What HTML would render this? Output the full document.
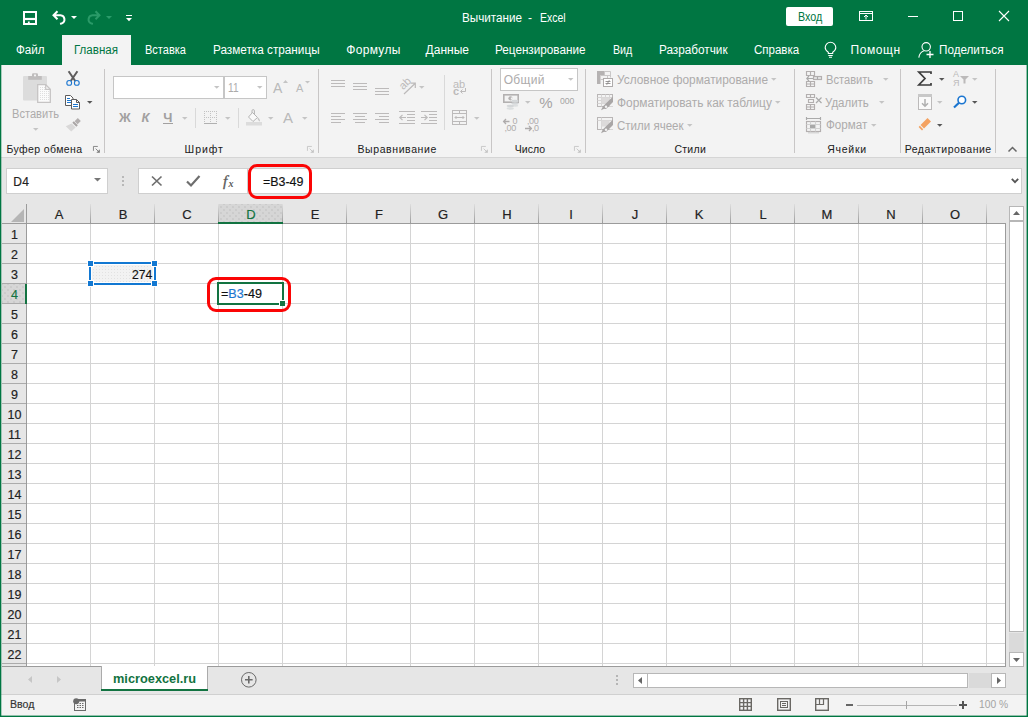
<!DOCTYPE html>
<html lang="ru"><head><meta charset="utf-8"><title>Вычитание - Excel</title>
<style>
*{box-sizing:border-box;margin:0;padding:0}
html,body{width:1028px;height:717px;overflow:hidden}
body{position:relative;background:#e6e6e6;font-family:"Liberation Sans",sans-serif;font-size:12px}
.a{position:absolute}
.t{position:absolute;white-space:pre;line-height:1;transform-origin:0 0}
svg{position:absolute;overflow:visible}
.sep{position:absolute;width:1px;background:#c8c6c6}
.ch,.rh,.b{-webkit-text-stroke:0.18px currentColor}
.ch{position:absolute;top:204px;height:19px;width:66px;text-align:center;font-size:13px;line-height:22px;color:#222}
.rh{position:absolute;left:2px;width:25px;height:20px;text-align:center;font-size:12.5px;line-height:21px;color:#222}

</style></head><body>
<div class="a" style="left:0;top:0;width:1028px;height:65px;background:#007642"></div>
<div class="a" style="left:0;top:65px;width:1028px;height:92px;background:#f3f3f3"></div>
<div class="a" style="left:0;top:157px;width:1028px;height:1px;background:#d5d5d5"></div>
<div class="a" style="left:62px;top:35px;width:69px;height:31px;background:#f3f3f3"></div>
<div class="a" style="left:786px;top:7px;width:47px;height:19px;background:#fff;border-radius:2px"></div>
<div class="sep" style="left:104px;top:69px;height:84px"></div>
<div class="sep" style="left:318px;top:69px;height:84px"></div>
<div class="sep" style="left:491px;top:69px;height:84px"></div>
<div class="sep" style="left:585px;top:69px;height:84px"></div>
<div class="sep" style="left:794px;top:69px;height:84px"></div>
<div class="sep" style="left:900px;top:69px;height:84px"></div>
<div class="sep" style="left:995px;top:69px;height:84px"></div>
<div class="sep" style="left:195px;top:108px;height:20px;background:#d9d9d9"></div>
<div class="sep" style="left:238px;top:108px;height:20px;background:#d9d9d9"></div>
<div class="sep" style="left:444px;top:75px;height:55px;background:#d9d9d9"></div>
<div class="a" style="left:113px;top:76px;width:111px;height:23px;background:#fff;border:1px solid #c6c6c6"></div>
<div class="a" style="left:224px;top:76px;width:43px;height:23px;background:#fff;border:1px solid #c6c6c6"></div>
<div class="a" style="left:500px;top:68px;width:78px;height:23px;background:#fff;border:1px solid #c6c6c6"></div>
<div class="a" style="left:6px;top:168px;width:102px;height:26px;background:#fff;border:1px solid #cfcfcf"></div>
<div class="a" style="left:138px;top:168px;width:884px;height:26px;background:#fff;border:1px solid #cfcfcf"></div>
<div class="a" style="left:247px;top:168px;width:1px;height:26px;background:#cfcfcf"></div>
<div class="a" style="left:2px;top:204px;width:1004px;height:463px;background:#fff"></div>
<div class="a" style="left:2px;top:204px;width:1004px;height:19px;background:#e6e6e6"></div>
<div class="a" style="left:2px;top:204px;width:24px;height:463px;background:#e6e6e6"></div>
<div class="a" style="left:218px;top:204px;width:65px;height:19px;background-color:#d6d6d6;background-image:radial-gradient(circle,#c6c6c6 0.6px,transparent 0.9px),radial-gradient(circle,#c6c6c6 0.6px,transparent 0.9px);background-size:6px 6px;background-position:0 0,3px 3px"></div>
<div class="a" style="left:2px;top:284px;width:24px;height:19px;background-color:#d6d6d6;background-image:radial-gradient(circle,#c6c6c6 0.6px,transparent 0.9px),radial-gradient(circle,#c6c6c6 0.6px,transparent 0.9px);background-size:6px 6px;background-position:0 0,3px 3px"></div>
<div class="a" style="left:27px;top:224px;width:979px;height:443px;background-image:linear-gradient(to right,transparent 63px,#d4d4d4 63px),linear-gradient(to bottom,transparent 19px,#d4d4d4 19px);background-size:64px 20px,64px 20px"></div>
<div class="a" style="left:2px;top:223px;width:1004px;height:1px;background:#9b9b9b"></div>
<div class="a" style="left:26px;top:204px;width:1px;height:463px;background:#9b9b9b"></div>
<div class="a" style="left:90px;top:204px;width:1px;height:19px;background:linear-gradient(#dedede,#9c9c9c)"></div>
<div class="a" style="left:154px;top:204px;width:1px;height:19px;background:linear-gradient(#dedede,#9c9c9c)"></div>
<div class="a" style="left:218px;top:204px;width:1px;height:19px;background:linear-gradient(#dedede,#9c9c9c)"></div>
<div class="a" style="left:282px;top:204px;width:1px;height:19px;background:linear-gradient(#dedede,#9c9c9c)"></div>
<div class="a" style="left:346px;top:204px;width:1px;height:19px;background:linear-gradient(#dedede,#9c9c9c)"></div>
<div class="a" style="left:410px;top:204px;width:1px;height:19px;background:linear-gradient(#dedede,#9c9c9c)"></div>
<div class="a" style="left:474px;top:204px;width:1px;height:19px;background:linear-gradient(#dedede,#9c9c9c)"></div>
<div class="a" style="left:538px;top:204px;width:1px;height:19px;background:linear-gradient(#dedede,#9c9c9c)"></div>
<div class="a" style="left:602px;top:204px;width:1px;height:19px;background:linear-gradient(#dedede,#9c9c9c)"></div>
<div class="a" style="left:666px;top:204px;width:1px;height:19px;background:linear-gradient(#dedede,#9c9c9c)"></div>
<div class="a" style="left:730px;top:204px;width:1px;height:19px;background:linear-gradient(#dedede,#9c9c9c)"></div>
<div class="a" style="left:794px;top:204px;width:1px;height:19px;background:linear-gradient(#dedede,#9c9c9c)"></div>
<div class="a" style="left:858px;top:204px;width:1px;height:19px;background:linear-gradient(#dedede,#9c9c9c)"></div>
<div class="a" style="left:922px;top:204px;width:1px;height:19px;background:linear-gradient(#dedede,#9c9c9c)"></div>
<div class="a" style="left:986px;top:204px;width:1px;height:19px;background:linear-gradient(#dedede,#9c9c9c)"></div>
<div class="a" style="left:2px;top:243px;width:24px;height:1px;background:#ababab"></div>
<div class="a" style="left:2px;top:263px;width:24px;height:1px;background:#ababab"></div>
<div class="a" style="left:2px;top:283px;width:24px;height:1px;background:#ababab"></div>
<div class="a" style="left:2px;top:303px;width:24px;height:1px;background:#ababab"></div>
<div class="a" style="left:2px;top:323px;width:24px;height:1px;background:#ababab"></div>
<div class="a" style="left:2px;top:343px;width:24px;height:1px;background:#ababab"></div>
<div class="a" style="left:2px;top:363px;width:24px;height:1px;background:#ababab"></div>
<div class="a" style="left:2px;top:383px;width:24px;height:1px;background:#ababab"></div>
<div class="a" style="left:2px;top:403px;width:24px;height:1px;background:#ababab"></div>
<div class="a" style="left:2px;top:423px;width:24px;height:1px;background:#ababab"></div>
<div class="a" style="left:2px;top:443px;width:24px;height:1px;background:#ababab"></div>
<div class="a" style="left:2px;top:463px;width:24px;height:1px;background:#ababab"></div>
<div class="a" style="left:2px;top:483px;width:24px;height:1px;background:#ababab"></div>
<div class="a" style="left:2px;top:503px;width:24px;height:1px;background:#ababab"></div>
<div class="a" style="left:2px;top:523px;width:24px;height:1px;background:#ababab"></div>
<div class="a" style="left:2px;top:543px;width:24px;height:1px;background:#ababab"></div>
<div class="a" style="left:2px;top:563px;width:24px;height:1px;background:#ababab"></div>
<div class="a" style="left:2px;top:583px;width:24px;height:1px;background:#ababab"></div>
<div class="a" style="left:2px;top:603px;width:24px;height:1px;background:#ababab"></div>
<div class="a" style="left:2px;top:623px;width:24px;height:1px;background:#ababab"></div>
<div class="a" style="left:2px;top:643px;width:24px;height:1px;background:#ababab"></div>
<div class="a" style="left:2px;top:663px;width:24px;height:1px;background:#ababab"></div>
<div class="a" style="left:218px;top:222px;width:65px;height:2px;background:#127341"></div>
<div class="a" style="left:25px;top:284px;width:2px;height:20px;background:#127341"></div>
<div class="a" style="left:1005px;top:223px;width:1px;height:444px;background:#9b9b9b"></div>
<div class="a" style="left:2px;top:666px;width:1004px;height:1px;background:#9b9b9b"></div>
<svg style="left:11px;top:209px" width="13" height="13"><path d="M13 0V13H0Z" fill="#b5b5b5"/></svg>
<div class="ch" style="left:26px">A</div>
<div class="ch" style="left:90px">B</div>
<div class="ch" style="left:154px">C</div>
<div class="ch" style="left:218px;color:#127341">D</div>
<div class="ch" style="left:282px">E</div>
<div class="ch" style="left:346px">F</div>
<div class="ch" style="left:410px">G</div>
<div class="ch" style="left:474px">H</div>
<div class="ch" style="left:538px">I</div>
<div class="ch" style="left:602px">J</div>
<div class="ch" style="left:666px">K</div>
<div class="ch" style="left:730px">L</div>
<div class="ch" style="left:794px">M</div>
<div class="ch" style="left:858px">N</div>
<div class="ch" style="left:922px">O</div>
<div class="rh" style="top:225px">1</div>
<div class="rh" style="top:245px">2</div>
<div class="rh" style="top:265px">3</div>
<div class="rh" style="top:285px;color:#127341">4</div>
<div class="rh" style="top:305px">5</div>
<div class="rh" style="top:325px">6</div>
<div class="rh" style="top:345px">7</div>
<div class="rh" style="top:365px">8</div>
<div class="rh" style="top:385px">9</div>
<div class="rh" style="top:405px">10</div>
<div class="rh" style="top:425px">11</div>
<div class="rh" style="top:445px">12</div>
<div class="rh" style="top:465px">13</div>
<div class="rh" style="top:485px">14</div>
<div class="rh" style="top:505px">15</div>
<div class="rh" style="top:525px">16</div>
<div class="rh" style="top:545px">17</div>
<div class="rh" style="top:565px">18</div>
<div class="rh" style="top:585px">19</div>
<div class="rh" style="top:605px">20</div>
<div class="rh" style="top:625px">21</div>
<div class="rh" style="top:645px">22</div>
<div class="a" style="left:89px;top:262px;width:67px;height:23px;border:2px solid #1278d2;background:#fff"></div>
<div class="a" style="left:92px;top:265px;width:61px;height:17px;background-color:#f2f2f2;background-image:radial-gradient(circle,#e2e2e2 0.6px,transparent 0.8px);background-size:3px 3px"></div>
<div class="a" style="left:88px;top:261px;width:5px;height:5px;background:#1278d2;box-shadow:0 0 0 1px #fff"></div>
<div class="a" style="left:152px;top:261px;width:5px;height:5px;background:#1278d2;box-shadow:0 0 0 1px #fff"></div>
<div class="a" style="left:88px;top:281px;width:5px;height:5px;background:#1278d2;box-shadow:0 0 0 1px #fff"></div>
<div class="a" style="left:152px;top:281px;width:5px;height:5px;background:#1278d2;box-shadow:0 0 0 1px #fff"></div>
<div class="a" style="left:217px;top:282px;width:67px;height:23px;border:2px solid #127341;background:#fff"></div>
<div class="a" style="left:279px;top:300px;width:6px;height:6px;background:#127341;border:1px solid #fff;border-right:0;border-bottom:0"></div>
<div class="a" style="left:207px;top:277px;width:84px;height:35px;border:3px solid #fb0505;border-radius:9px"></div>
<div class="a" style="left:248px;top:164px;width:64px;height:35px;border:3px solid #fb0505;border-radius:9px"></div>
<div class="a" style="left:1009px;top:633px;width:15px;height:19px;background:#dadada"></div>
<div class="a" style="left:1009px;top:206px;width:15px;height:15px;background:#fff;border:1px solid #b7b7b7"></div>
<div class="a" style="left:1009px;top:221px;width:15px;height:411px;background:#fff;border:1px solid #b7b7b7"></div>
<div class="a" style="left:1009px;top:652px;width:15px;height:15px;background:#fff;border:1px solid #b7b7b7"></div>
<div class="a" style="left:969px;top:673px;width:22px;height:15px;background:#dadada"></div>
<div class="a" style="left:633px;top:673px;width:15px;height:15px;background:#fff;border:1px solid #b7b7b7"></div>
<div class="a" style="left:647px;top:673px;width:321px;height:15px;background:#fff;border:1px solid #b7b7b7"></div>
<div class="a" style="left:991px;top:673px;width:15px;height:15px;background:#fff;border:1px solid #b7b7b7"></div>
<div class="a" style="left:101px;top:666px;width:107px;height:24px;background:#fff;border-left:1px solid #ababab;border-right:1px solid #ababab"></div>
<div class="a" style="left:101px;top:689px;width:107px;height:2px;background:#127341"></div>
<div class="a" style="left:0;top:694px;width:1028px;height:23px;background:#f3f3f3;border-top:1px solid #d0d0d0"></div>
<div class="a" style="left:0;top:0;width:1028px;height:717px;border:1px solid #007642;border-top:0;pointer-events:none"></div>
<div class="a" style="left:1px;top:65px;width:1px;height:651px;background:rgba(0,118,66,.3)"></div><div class="a" style="left:1026px;top:65px;width:1px;height:651px;background:rgba(0,118,66,.4)"></div><div class="a" style="left:1px;top:715px;width:1026px;height:1px;background:rgba(0,118,66,.4)"></div>
<!-- QAT -->
<svg style="left:23px;top:11px" width="14" height="14" viewBox="0 0 14 14" fill="none" stroke="#fff"><rect x="1" y="1" width="12" height="12" stroke-width="2"/><path d="M1 8h12" stroke-width="2.200"/><path d="M5.800 10.500v3" stroke-width="1.800"/></svg>
<svg style="left:52px;top:10px" width="15" height="15" viewBox="0 0 15 15" fill="none" stroke="#fff" stroke-width="2"><path d="M5.500 1.200L1.500 5.300l4 4 M2 5.300H8.500a4.200 4.200 0 0 1 1 8.200L8 13.800"/></svg>
<svg style="left:71px;top:16px" width="6" height="3" viewBox="0 0 6 3"><path d="M0 0h6L3 3z" fill="#fff"/></svg>
<svg style="left:86px;top:10px" width="15" height="15" viewBox="0 0 15 15" fill="none" stroke="#2a9a68" stroke-width="2"><path d="M9.500 1.200l4 4.100-4 4 M13 5.300H6.500a4.200 4.200 0 0 0-1 8.200L7 13.800"/></svg>
<svg style="left:106px;top:16px" width="6" height="3" viewBox="0 0 6 3"><path d="M0 0h6L3 3z" fill="#2b9b6a"/></svg>
<svg style="left:126px;top:15px" width="6" height="7" viewBox="0 0 6 7"><path d="M0 0h6v1H0z M0 3h6L3 6.2z" fill="#fff"/></svg>
<!-- window controls -->
<svg style="left:859px;top:11px" width="14" height="10" viewBox="0 0 14 10" fill="none" stroke="#fff"><rect x=".5" y=".5" width="13" height="9"/><path d="M.5 2.5h13" /><path d="M7 8.5V4.5M5 6l2-2 2 2"/></svg>
<div class="a" style="left:908px;top:16px;width:10px;height:1px;background:#fff"></div>
<div class="a" style="left:953px;top:11px;width:10px;height:10px;border:1px solid #fff"></div>
<svg style="left:999px;top:11px" width="10" height="10" viewBox="0 0 10 10" stroke="#fff" stroke-width="1.1"><path d="M0 0l10 10M10 0L0 10"/></svg>
<!-- bulb & share -->
<svg style="left:824px;top:42px" width="13" height="16" viewBox="0 0 13 16" fill="none" stroke="#fff" stroke-width="1.1"><path d="M4.3 11.5V10.2C2.6 9.2 1.2 7.8 1.2 5.6a5.3 5.3 0 0 1 10.6 0c0 2.2-1.4 3.600-3.100 4.600v1.300z"/><path d="M4.300 13.500h4.400M5 15.300h3"/></svg>
<svg style="left:918px;top:42px" width="17" height="16" viewBox="0 0 17 16" fill="none" stroke="#fff" stroke-width="1.100"><circle cx="8.200" cy="4.800" r="4.200"/><path d="M.8 15.600c.6-3.600 2.400-5.700 4.900-6.500"/><path d="M12 9v7M8.500 12.500h7" stroke-width="1.300"/></svg>
<!-- clipboard group -->
<svg style="left:22px;top:72px" width="30" height="32" viewBox="0 0 30 32"><rect x="1" y="4" width="24" height="24.600" rx="1" fill="#dcdcdc"/><path d="M6.200 4h13.600v3.800H6.200z" fill="#bfbdbd"/><path d="M10 4V2.500a1.200 1.200 0 0 1 1.200-1.200h3.600a1.200 1.200 0 0 1 1.200 1.200V4z" fill="#bfbdbd"/><rect x="12" y="2.500" width="2" height="1.800" fill="#f3f3f3"/><path d="M15.700 12.700h8l4.600 4.600v13h-12.600z" fill="#fbfbfb" stroke="#c6c4c4" stroke-width="1.300"/><path d="M23.700 12.700v4.600h4.600" fill="none" stroke="#c6c4c4" stroke-width="1.200"/><path d="M18 15h1v1h-1zM20 15h1v1h-1zM22 15h1v1h-1zM18 17h1v1h-1zM20 17h1v1h-1zM22 17h1v1h-1zM18 19h1v1h-1zM20 19h1v1h-1zM22 19h1v1h-1zM24 19h1v1h-1zM26 19h1v1h-1zM18 21h1v1h-1zM20 21h1v1h-1zM22 21h1v1h-1zM24 21h1v1h-1zM26 21h1v1h-1zM18 23h1v1h-1zM20 23h1v1h-1zM22 23h1v1h-1zM24 23h1v1h-1zM26 23h1v1h-1zM18 25h1v1h-1zM20 25h1v1h-1zM22 25h1v1h-1zM24 25h1v1h-1zM26 25h1v1h-1zM18 27h1v1h-1zM20 27h1v1h-1zM22 27h1v1h-1zM24 27h1v1h-1zM26 27h1v1h-1z" fill="#dedede"/></svg>
<svg style="left:33px;top:128px" width="6" height="3" viewBox="0 0 6 3"><path d="M0 0h5.500L2.750 2.750z" fill="#c4c4c4"/></svg>
<svg style="left:65px;top:71px" width="16" height="16" viewBox="0 0 16 16" fill="none"><path d="M3.600.3L10.400 10.300M12.400.3L5.600 10.300" stroke="#5e5c5c" stroke-width="2"/><circle cx="4.200" cy="11.900" r="2.400" stroke="#1b76d0" stroke-width="1.100" fill="#f3f3f3"/><circle cx="11.800" cy="11.900" r="2.400" stroke="#1b76d0" stroke-width="1.100" fill="#f3f3f3"/></svg>
<svg style="left:65px;top:95px" width="16" height="15" viewBox="0 0 16 15" fill="none"><path d="M.5.500h5l2.500 2.500v7.500h-7.500z" fill="#fff" stroke="#5e5c5c"/><path d="M2 3.500h3M2 5.500h4M2 7.500h4" stroke="#1b76d0"/><path d="M6.500 4.500h5l3 3v6.500h-8z" fill="#fff" stroke="#5e5c5c"/><path d="M11.500 4.500v3h3" stroke="#5e5c5c"/><path d="M8 9.500h5M8 11.500h5" stroke="#1b76d0"/></svg>
<svg style="left:87px;top:101px" width="6" height="3" viewBox="0 0 6 3"><path d="M0 0h5.500L2.750 2.750z" fill="#555"/></svg>
<svg style="left:65px;top:117px" width="17" height="15" viewBox="0 0 17 15"><path d="M12.800 1l3 3-3.200 3.200-3-3z" fill="#b3afaf"/><path d="M8.800 4.200l4 4-1.500 1.500-4-4z" fill="#a9a5a5"/><path d="M6.600 6.400l4 4-4.400 4L.8 9.200z" fill="#d9d8d8"/></svg>
<!-- launchers -->
<svg style="left:93px;top:146px" width="7" height="7" viewBox="0 0 8 8" fill="none" stroke="#7a7a7a"><path d="M.5 5.500V.5H5.500"/><path d="M3 3l4 4"/><path d="M7.800 3.800V7.800H3.800z" fill="#7a7a7a" stroke="none"/></svg>
<svg style="left:307px;top:146px" width="7" height="7" viewBox="0 0 8 8" fill="none" stroke="#c2c2c2"><path d="M.5 5.500V.5H5.500"/><path d="M3 3l4 4"/><path d="M7.800 3.800V7.800H3.800z" fill="#c2c2c2" stroke="none"/></svg>
<svg style="left:480.5px;top:146px" width="7" height="7" viewBox="0 0 8 8" fill="none" stroke="#c2c2c2"><path d="M.5 5.500V.5H5.500"/><path d="M3 3l4 4"/><path d="M7.800 3.800V7.800H3.800z" fill="#c2c2c2" stroke="none"/></svg>
<svg style="left:574px;top:146px" width="7" height="7" viewBox="0 0 8 8" fill="none" stroke="#c2c2c2"><path d="M.5 5.500V.5H5.500"/><path d="M3 3l4 4"/><path d="M7.800 3.800V7.800H3.800z" fill="#c2c2c2" stroke="none"/></svg>
<!-- font group -->
<svg style="left:214px;top:86px" width="6" height="3" viewBox="0 0 6 3"><path d="M0 0h5.500L2.750 2.750z" fill="#c4c4c4"/></svg>
<svg style="left:257px;top:86px" width="6" height="3" viewBox="0 0 6 3"><path d="M0 0h5.500L2.750 2.750z" fill="#c4c4c4"/></svg>
<span class="t" style="left:273px;top:80.500px;font-size:14px;color:#b9b9b9">A</span>
<svg style="left:282.500px;top:80px" width="5" height="3" viewBox="0 0 5 3"><path d="M0 3h5L2.500 0z" fill="#c4c4c4"/></svg>
<span class="t" style="left:296px;top:83px;font-size:11px;color:#b9b9b9">A</span>
<svg style="left:304.500px;top:80.500px" width="5" height="3" viewBox="0 0 5 3"><path d="M0 0h5L2.500 2.500z" fill="#c4c4c4"/></svg>
<div class="a" style="left:163px;top:123px;width:10px;height:1px;background:#a2a0a0"></div>
<svg style="left:182px;top:117px" width="6" height="3" viewBox="0 0 6 3"><path d="M0 0h5.500L2.750 2.750z" fill="#c4c4c4"/></svg>
<svg style="left:204px;top:111px" width="13" height="13" viewBox="0 0 13 13" fill="none" stroke="#c2c2c2" stroke-dasharray="1 1"><path d="M0 .5h13M0 6.500h13M.5 0v13M6.500 0v13M12.500 0v13"/><path d="M0 12.500h13" stroke="#b0b0b0" stroke-dasharray="none"/></svg>
<svg style="left:225px;top:117px" width="6" height="3" viewBox="0 0 6 3"><path d="M0 0h5.500L2.750 2.750z" fill="#c4c4c4"/></svg>
<svg style="left:246px;top:109px" width="17" height="17" viewBox="0 0 17 17" fill="none"><path d="M6.500 3.500l5 5-4.500 4-4.500-4.500z" stroke="#b5b5b5" fill="#fafafa"/><path d="M6 4V1.800a1.200 1.200 0 0 1 2.400 0V5" stroke="#b5b5b5"/><path d="M11.500 8.500c1.500.5 2.500 2 2.500 4c-1.500-.5-2.500-2-2.500-4z" fill="#c4c4c4"/><rect x="0" y="13" width="16" height="3.500" fill="#dcdcdc"/></svg>
<svg style="left:268px;top:117px" width="6" height="3" viewBox="0 0 6 3"><path d="M0 0h5.500L2.750 2.750z" fill="#c4c4c4"/></svg>
<span class="t" style="left:283px;top:110px;font-size:15px;color:#b9b9b9">A</span>
<svg style="left:302px;top:117px" width="6" height="3" viewBox="0 0 6 3"><path d="M0 0h5.500L2.750 2.750z" fill="#c4c4c4"/></svg>
<!-- alignment group -->
<div class="a" style="left:331px;top:80px;width:14px;height:1px;background:#bcbaba"></div>
<div class="a" style="left:331px;top:83px;width:14px;height:1px;background:#bcbaba"></div>
<div class="a" style="left:331px;top:86px;width:14px;height:1px;background:#bcbaba"></div>
<div class="a" style="left:353px;top:83px;width:14px;height:1px;background:#bcbaba"></div>
<div class="a" style="left:353px;top:86px;width:14px;height:1px;background:#bcbaba"></div>
<div class="a" style="left:353px;top:89px;width:14px;height:1px;background:#bcbaba"></div>
<div class="a" style="left:375px;top:88px;width:14px;height:1px;background:#bcbaba"></div>
<div class="a" style="left:375px;top:91px;width:14px;height:1px;background:#bcbaba"></div>
<div class="a" style="left:375px;top:94px;width:14px;height:1px;background:#bcbaba"></div>
<div class="a" style="left:331px;top:113px;width:14px;height:1px;background:#bcbaba"></div>
<div class="a" style="left:331px;top:116px;width:10px;height:1px;background:#bcbaba"></div>
<div class="a" style="left:331px;top:119px;width:14px;height:1px;background:#bcbaba"></div>
<div class="a" style="left:331px;top:122px;width:10px;height:1px;background:#bcbaba"></div>
<div class="a" style="left:353.0px;top:113px;width:14px;height:1px;background:#bcbaba"></div>
<div class="a" style="left:355.0px;top:116px;width:10px;height:1px;background:#bcbaba"></div>
<div class="a" style="left:353.0px;top:119px;width:14px;height:1px;background:#bcbaba"></div>
<div class="a" style="left:355.0px;top:122px;width:10px;height:1px;background:#bcbaba"></div>
<div class="a" style="left:375px;top:113px;width:14px;height:1px;background:#bcbaba"></div>
<div class="a" style="left:379px;top:116px;width:10px;height:1px;background:#bcbaba"></div>
<div class="a" style="left:375px;top:119px;width:14px;height:1px;background:#bcbaba"></div>
<div class="a" style="left:379px;top:122px;width:10px;height:1px;background:#bcbaba"></div>
<span class="t" style="left:399px;top:78px;font-size:11px;color:#bcbaba;transform:rotate(-45deg);transform-origin:50% 50%">ab</span>
<svg style="left:403px;top:82px" width="14" height="13" viewBox="0 0 14 13" fill="none" stroke="#bcbaba" stroke-width="1.200"><path d="M1 12L12 1.500M7.500 1.200h4.800v4.800"/></svg>
<svg style="left:419px;top:86px" width="6" height="3" viewBox="0 0 6 3"><path d="M0 0h5.500L2.750 2.750z" fill="#c4c4c4"/></svg>
<span class="t" style="left:453px;top:79px;font-size:11px;color:#bcbaba">ab</span>
<span class="t" style="left:453px;top:86px;font-size:11px;color:#bcbaba;font-weight:700">c</span>
<svg style="left:460px;top:88px" width="6" height="6" viewBox="0 0 6 6" fill="none" stroke="#bcbaba"><path d="M5.500 0v3.500H1M2.500 1.500l-2 2 2 2"/></svg>
<div class="a" style="left:399px;top:111px;width:16px;height:1px;background:#bcbaba"></div>
<div class="a" style="left:399px;top:123px;width:16px;height:1px;background:#bcbaba"></div>
<div class="a" style="left:407px;top:114px;width:8px;height:1px;background:#bcbaba"></div>
<div class="a" style="left:407px;top:117px;width:8px;height:1px;background:#bcbaba"></div>
<div class="a" style="left:407px;top:120px;width:8px;height:1px;background:#bcbaba"></div>
<svg style="left:399px;top:114px" width="8" height="7" viewBox="0 0 8 7" fill="none" stroke="#bcbaba" stroke-width="1.200"><path d="M7 3.500H1M3.500 .800L.800 3.500l2.700 2.700"/></svg>
<div class="a" style="left:421px;top:111px;width:16px;height:1px;background:#bcbaba"></div>
<div class="a" style="left:421px;top:123px;width:16px;height:1px;background:#bcbaba"></div>
<div class="a" style="left:429px;top:114px;width:8px;height:1px;background:#bcbaba"></div>
<div class="a" style="left:429px;top:117px;width:8px;height:1px;background:#bcbaba"></div>
<div class="a" style="left:429px;top:120px;width:8px;height:1px;background:#bcbaba"></div>
<svg style="left:421px;top:114px" width="8" height="7" viewBox="0 0 8 7" fill="none" stroke="#bcbaba" stroke-width="1.200"><path d="M0 3.500H6M3.500 .800L6.200 3.500l-2.700 2.700"/></svg>
<svg style="left:452px;top:110px" width="15" height="15" viewBox="0 0 15 15" fill="none" stroke="#bcbaba"><rect x=".5" y=".5" width="14" height="14"/><path d="M.5 3.500h14M.5 11.500h14M7.500 .500v3M7.500 11.500v3"/><path d="M3 7.500h9M4.500 6L3 7.500 4.500 9M10.500 6L12 7.500 10.500 9"/></svg>
<svg style="left:474px;top:117px" width="6" height="3" viewBox="0 0 6 3"><path d="M0 0h5.500L2.750 2.750z" fill="#c4c4c4"/></svg>
<!-- number group -->
<svg style="left:568px;top:78px" width="6" height="3" viewBox="0 0 6 3"><path d="M0 0h5.500L2.750 2.750z" fill="#c4c4c4"/></svg>
<svg style="left:503px;top:94px" width="17" height="16" viewBox="0 0 17 16" fill="none"><rect x=".8" y=".8" width="14.400" height="7.400" stroke="#b3b1b1" stroke-width="1.600"/><circle cx="7.500" cy="4.300" r="2.100" fill="#b3b1b1"/><path d="M7.800 3.500h2v2h-2z" fill="#f3f3f3"/><ellipse cx="12" cy="7" rx="3.600" ry="1.200" fill="#d4d7d9"/><ellipse cx="12" cy="9.500" rx="3.600" ry="1.200" fill="#d4d7d9"/><ellipse cx="12.300" cy="11.800" rx="3" ry="1" fill="#dcdfe0"/><ellipse cx="7.300" cy="12" rx="3.600" ry="1.200" fill="#d4d7d9"/><ellipse cx="7.300" cy="14.500" rx="3.600" ry="1.200" fill="#dcdfe0"/></svg>
<svg style="left:525px;top:101px" width="6" height="3" viewBox="0 0 6 3"><path d="M0 0h5.500L2.750 2.750z" fill="#c4c4c4"/></svg>
<svg style="left:503px;top:118px" width="14" height="14" viewBox="0 0 14 14" fill="none" stroke="#aeabab"><path d="M6.500 3.500H.8M3 1L.6 3.500 3 6" stroke-width="1.300"/></svg>
<span class="t" style="left:512.500px;top:116.500px;font-size:9px;color:#aeabab">0</span><span class="t" style="left:504.500px;top:123.500px;font-size:9px;color:#aeabab;letter-spacing:-.4px">,00</span>
<svg style="left:525px;top:118px" width="14" height="14" viewBox="0 0 14 14" fill="none" stroke="#aeabab"><path d="M0 10.500h6.200M4 8l2.400 2.500L4 13" stroke-width="1.300"/></svg>
<span class="t" style="left:527px;top:116.500px;font-size:9px;color:#aeabab;letter-spacing:-.4px">,00</span><span class="t" style="left:532px;top:123.500px;font-size:9px;color:#aeabab;letter-spacing:-.4px">,0</span>
<!-- styles group -->
<svg style="left:597px;top:71px" width="16" height="16" viewBox="0 0 16 16" fill="none"><path d="M0 0h7v4H3.500v9H0z" fill="#b5b2b2"/><path d="M7 .5h6.500v6M3.500 8.500h3M7.500 0v4M10.500 4v3M3.500 4.500h10" stroke="#c9c7c7"/><rect x="6.500" y="7.500" width="9" height="8" fill="#fff" stroke="#aeabab"/><path d="M8.500 10.500h5M8.500 12.500h5M12.300 9.200l-2.600 4.600" stroke="#8f8c8c" stroke-width=".9"/></svg>
<svg style="left:597px;top:94px" width="16" height="16" viewBox="0 0 16 16" fill="none"><rect x=".5" y=".5" width="15" height="12" stroke="#b9b6b6"/><path d="M.5 3.500h15M.5 6.500h15M.5 9.500h15M4.500 .500v12M8.500 .500v12M12.500 .500v12" stroke="#d6d4d4"/><rect x="4.500" y="3.500" width="8" height="6" fill="#dcdada"/><path d="M12.500 12.500h3.500v-9z" fill="#f3f3f3"/><path d="M16 2.500v5.500l-5.500 5.500a2.600 2.600 0 0 1-3.300 1.200L4 16.200l1.800-3.800z" fill="#a9a6a6"/><circle cx="9" cy="12.800" r="1.200" fill="#f3f3f3"/></svg>
<svg style="left:597px;top:117px" width="16" height="16" viewBox="0 0 16 16" fill="none"><rect x=".5" y=".5" width="15" height="12" stroke="#b9b6b6"/><path d="M.5 3.500h15M4.500 .500v12" stroke="#d6d4d4"/><rect x="4.500" y="3.500" width="8" height="6" fill="#dcdada"/><path d="M12.500 12.500h3.500v-9z" fill="#f3f3f3"/><path d="M16 2.500v5.500l-5.500 5.500a2.600 2.600 0 0 1-3.300 1.200L4 16.200l1.800-3.800z" fill="#a9a6a6"/><circle cx="9" cy="12.800" r="1.200" fill="#f3f3f3"/></svg>
<svg style="left:771px;top:77.6px" width="6" height="3" viewBox="0 0 6 3"><path d="M0 0h5.500L2.750 2.750z" fill="#c4c4c4"/></svg>
<svg style="left:775px;top:100.6px" width="6" height="3" viewBox="0 0 6 3"><path d="M0 0h5.500L2.750 2.750z" fill="#c4c4c4"/></svg>
<svg style="left:687px;top:123.6px" width="6" height="3" viewBox="0 0 6 3"><path d="M0 0h5.500L2.750 2.750z" fill="#c4c4c4"/></svg>
<svg style="left:883px;top:77.6px" width="6" height="3" viewBox="0 0 6 3"><path d="M0 0h5.500L2.750 2.750z" fill="#c4c4c4"/></svg>
<svg style="left:879px;top:100.6px" width="6" height="3" viewBox="0 0 6 3"><path d="M0 0h5.500L2.750 2.750z" fill="#c4c4c4"/></svg>
<svg style="left:871px;top:123.6px" width="6" height="3" viewBox="0 0 6 3"><path d="M0 0h5.500L2.750 2.750z" fill="#c4c4c4"/></svg>
<!-- cells group -->
<svg style="left:806px;top:71px" width="16" height="16" viewBox="0 0 16 16" fill="none" stroke="#b3afaf" stroke-width="1.150"><path d="M.5.500h8v4h-8zM.5 10.500h8v5h-8zM4.500 .500v4M4.500 10.500v5M.5 13h8"/><rect x="7.500" y="5.500" width="8" height="3" fill="#e4e4e4"/><path d="M11.500 5.500v3M7 7.500H1M3 5L.8 7.500 3 10" stroke="#aaa"/></svg>
<svg style="left:806px;top:94px" width="16" height="16" viewBox="0 0 16 16" fill="none" stroke="#b3afaf" stroke-width="1.150"><path d="M.5.500h8v3h-8zM.5 10.500h8v5h-8zM4.500 .500v3M4.500 10.500v5M.5 13h8M2.500 5.500h5v3h-5z"/><path d="M10 3.500l5.500 5.500M15.500 3.500L10 9" stroke="#aaa" stroke-width="1.200"/></svg>
<svg style="left:806px;top:117px" width="16" height="16" viewBox="0 0 16 16" fill="none" stroke="#b3afaf" stroke-width="1.150"><path d="M.5 0v3M14.500 0v3M1 1.500h13" stroke="#aaa"/><rect x=".5" y="4.500" width="14" height="10"/><path d="M.5 7.500h14M.5 11.500h14M4.500 4.500v10M9.500 4.500v10" stroke="#d2d2d2"/><rect x="4" y="8" width="5" height="3" fill="#a8a8a8" stroke="none"/><path d="M2 15.800h11" stroke="#cfcfcf"/></svg>
<!-- editing group -->
<svg style="left:917px;top:71px" width="15" height="15" viewBox="0 0 15 15" fill="none" stroke="#3d3d3d" stroke-width="1.700"><path d="M14 3V1H1.800L8 7.500 1.800 14H14v-2"/></svg>
<svg style="left:939px;top:78px" width="6" height="3" viewBox="0 0 6 3"><path d="M0 0h5.500L2.750 2.750z" fill="#555"/></svg>
<span class="t" style="left:953px;top:70px;font-size:9px;color:#bcbaba">A</span><span class="t" style="left:953px;top:79px;font-size:9px;color:#bcbaba">Я</span>
<svg style="left:960px;top:76px" width="9" height="8" viewBox="0 0 9 8"><path d="M0 0h9L5.500 3.500V7.500h-2V3.500z" fill="#bcbaba"/></svg>
<svg style="left:972px;top:78px" width="6" height="3" viewBox="0 0 6 3"><path d="M0 0h5.500L2.750 2.750z" fill="#c4c4c4"/></svg>
<svg style="left:918px;top:94px" width="14" height="16" viewBox="0 0 14 16" fill="none"><rect x=".5" y=".5" width="13" height="15" stroke="#bcbaba" fill="#fafafa"/><rect x="0" y="0" width="14" height="3" fill="#c8c8c8"/><path d="M7 5v7M4 9.300l3 3 3-3" stroke="#b0b0b0" stroke-width="1.500"/></svg>
<svg style="left:937px;top:101px" width="6" height="3" viewBox="0 0 6 3"><path d="M0 0h5.500L2.750 2.750z" fill="#c4c4c4"/></svg>
<svg style="left:953px;top:95px" width="14" height="14" viewBox="0 0 14 14" fill="none"><circle cx="8.800" cy="5" r="3.800" stroke="#1b76d0" stroke-width="1.600" fill="#fff"/><path d="M6 7.800L1 12.500" stroke="#1b76d0" stroke-width="2.200"/></svg>
<svg style="left:972px;top:101px" width="6" height="3" viewBox="0 0 6 3"><path d="M0 0h5.500L2.750 2.750z" fill="#555"/></svg>
<svg style="left:918px;top:118px" width="14" height="13" viewBox="0 0 14 13"><path d="M9.500 0l3.500 3.500-7 7L2.500 7z" fill="#f4a261"/><path d="M1.800 7.800l3.400 3.400-1.200 1.200-3.400-3.400z" fill="#f4a261"/></svg>
<svg style="left:937px;top:124px" width="6" height="3" viewBox="0 0 6 3"><path d="M0 0h5.500L2.750 2.750z" fill="#555"/></svg>
<svg style="left:1008px;top:146px" width="9" height="6" viewBox="0 0 9 6" fill="none" stroke="#666" stroke-width="1.500"><path d="M.5 5.500l4-4 4 4"/></svg>
<!-- formula bar -->
<svg style="left:94px;top:178px" width="7" height="4" viewBox="0 0 7 4"><path d="M0 0h7L3.500 3.500z" fill="#777"/></svg>
<div class="a" style="left:122px;top:176px;width:2px;height:2px;background:#b8b8b8"></div>
<div class="a" style="left:122px;top:180px;width:2px;height:2px;background:#b8b8b8"></div>
<div class="a" style="left:122px;top:184px;width:2px;height:2px;background:#b8b8b8"></div>
<svg style="left:151px;top:176px" width="12" height="10" viewBox="0 0 12 10" fill="none" stroke="#6e6e6e" stroke-width="1.700"><path d="M1 .500l9.500 9M10.500 .500L1 9.500"/></svg>
<svg style="left:186px;top:175px" width="15" height="12" viewBox="0 0 15 12" fill="none" stroke="#6e6e6e" stroke-width="2.200"><path d="M1 6.500l4 4L13.500 1"/></svg>
<span class="t" style="left:223px;top:172.500px;font-family:'Liberation Serif',serif;font-style:italic;font-size:15.5px;color:#5a5a5a;-webkit-text-stroke:0.3px #5a5a5a">f</span><span class="t" style="left:228.500px;top:178.500px;font-family:'Liberation Serif',serif;font-style:italic;font-size:10px;color:#5a5a5a;font-weight:700">x</span>
<svg style="left:1010.500px;top:178px" width="8" height="6" viewBox="0 0 8 6" fill="none" stroke="#555" stroke-width="1.800"><path d="M.8.800l3.200 3.400L7.200.800"/></svg>
<!-- scrollbars -->
<svg style="left:1013px;top:211px" width="7" height="4" viewBox="0 0 7 4"><path d="M0 4h7L3.500 0z" fill="#666"/></svg>
<svg style="left:1013px;top:658px" width="7" height="4" viewBox="0 0 7 4"><path d="M0 0h7L3.500 4z" fill="#666"/></svg>
<svg style="left:638px;top:677px" width="4" height="7" viewBox="0 0 4 7"><path d="M4 0v7L0 3.500z" fill="#666"/></svg>
<svg style="left:997px;top:677px" width="4" height="7" viewBox="0 0 4 7"><path d="M0 0v7L4 3.500z" fill="#666"/></svg>
<div class="a" style="left:616px;top:675px;width:2px;height:2px;background:#b5b5b5"></div>
<div class="a" style="left:616px;top:679px;width:2px;height:2px;background:#b5b5b5"></div>
<div class="a" style="left:616px;top:683px;width:2px;height:2px;background:#b5b5b5"></div>
<!-- sheet nav -->
<svg style="left:28px;top:676px" width="4" height="7" viewBox="0 0 4 7"><path d="M4 0v7L0 3.500z" fill="#c6c6c6"/></svg>
<svg style="left:57px;top:676px" width="4" height="7" viewBox="0 0 4 7"><path d="M0 0v7L4 3.500z" fill="#c6c6c6"/></svg>
<svg style="left:241px;top:672px" width="16" height="16" viewBox="0 0 16 16" fill="none" stroke="#6a6a6a"><circle cx="7.800" cy="7.800" r="7.300"/><path d="M7.800 4v7.600M4 7.800h7.600" stroke-width="1.600"/></svg>
<!-- status bar -->
<svg style="left:73px;top:698px" width="14" height="13" viewBox="0 0 14 13" fill="none"><rect x="1.500" y="1.500" width="11" height="11" stroke="#6a6a6a"/><rect x="1" y="1" width="12" height="2.500" fill="#6a6a6a"/><circle cx="3.200" cy="3.200" r="3" fill="#6a6a6a"/><path d="M4 7.500h1.500M6.500 7.500h1.500M9 7.500h1.500M4 9.500h1.500M6.500 9.500h1.500M9 9.500h1.500M4 5.500h0M6.500 5.500h1.500M9 5.500h1.500" stroke="#6a6a6a"/></svg>
<svg style="left:739px;top:698px" width="13" height="13" viewBox="0 0 13 13" fill="none" stroke="#6a6864" stroke-width="1.400"><rect x=".7" y=".7" width="11.600" height="11.600"/><path d="M.7 4.600h11.600M.7 8.400h11.600M4.600 .7v11.600M8.400 .7v11.600"/></svg>
<svg style="left:777px;top:698px" width="14" height="13" viewBox="0 0 14 13" fill="none" stroke="#6a6864"><rect x=".7" y=".7" width="12.600" height="11.600" stroke-width="1.400"/><rect x="3.500" y="3.500" width="7" height="6"/><path d="M5 5.500h4M5 7.500h4"/></svg>
<svg style="left:815px;top:698px" width="14" height="13" viewBox="0 0 14 13" fill="none" stroke="#6a6864"><rect x=".7" y=".7" width="12.600" height="11.600" stroke-width="1.400"/><path d="M.7 6.500H8.500V.7M4.500 .7v5.800" stroke-width="1.200"/></svg>
<div class="a" style="left:846px;top:704px;width:7px;height:2px;background:#666"></div>
<div class="a" style="left:857px;top:705px;width:100px;height:1px;background:#b5b5b5"></div>
<div class="a" style="left:906px;top:701px;width:1px;height:8px;background:#a5a5a5"></div>
<svg style="left:959px;top:701px" width="8" height="8" viewBox="0 0 8 8" stroke="#555" stroke-width="2"><path d="M4 0v8M0 4h8"/></svg>

<span class="t" style="left:461.5px;top:11.8px;font-size:12px;color:#fff;transform:scaleX(0.975);">Вычитание</span>
<span class="t" style="left:528.0px;top:11.8px;font-size:12px;color:#fff;">-</span>
<span class="t" style="left:539.9px;top:11.8px;font-size:12px;color:#fff;transform:scaleX(0.872);">Excel</span>
<span class="t" style="left:797.8px;top:10.5px;font-size:12px;color:#007642;transform:scaleX(0.892);">Вход</span>
<span class="t" style="left:16.2px;top:44.1px;font-size:12px;color:#fff;transform:scaleX(0.969);">Файл</span>
<span class="t" style="left:74.4px;top:44.1px;font-size:12px;color:#007642;transform:scaleX(0.963);">Главная</span>
<span class="t" style="left:145.4px;top:44.1px;font-size:12px;color:#fff;transform:scaleX(0.917);">Вставка</span>
<span class="t" style="left:213.4px;top:44.1px;font-size:12px;color:#fff;transform:scaleX(0.979);">Разметка страницы</span>
<span class="t" style="left:346.2px;top:44.1px;font-size:12px;color:#fff;letter-spacing:0.33px;">Формулы</span>
<span class="t" style="left:425.6px;top:44.1px;font-size:12px;color:#fff;letter-spacing:0.00px;">Данные</span>
<span class="t" style="left:495.4px;top:44.1px;font-size:12px;color:#fff;transform:scaleX(0.976);">Рецензирование</span>
<span class="t" style="left:612.7px;top:44.1px;font-size:12px;color:#fff;transform:scaleX(0.889);">Вид</span>
<span class="t" style="left:658.5px;top:44.1px;font-size:12px;color:#fff;transform:scaleX(0.980);">Разработчик</span>
<span class="t" style="left:754.3px;top:44.1px;font-size:12px;color:#fff;transform:scaleX(0.960);">Справка</span>
<span class="t" style="left:850.6px;top:44.1px;font-size:12px;color:#fff;letter-spacing:0.56px;">Помощн</span>
<span class="t" style="left:938.7px;top:44.1px;font-size:12px;color:#fff;transform:scaleX(0.973);">Поделиться</span>
<span class="t" style="left:6.4px;top:144.2px;font-size:10.5px;color:#202020;letter-spacing:0.39px;">Буфер обмена</span>
<span class="t" style="left:184.6px;top:144.2px;font-size:10.5px;color:#202020;letter-spacing:0.92px;">Шрифт</span>
<span class="t" style="left:357.5px;top:144.2px;font-size:10.5px;color:#202020;letter-spacing:0.59px;">Выравнивание</span>
<span class="t" style="left:514.7px;top:144.2px;font-size:10.5px;color:#202020;letter-spacing:0.06px;">Число</span>
<span class="t" style="left:674.4px;top:144.2px;font-size:10.5px;color:#202020;letter-spacing:0.28px;">Стили</span>
<span class="t" style="left:827.2px;top:144.2px;font-size:10.5px;color:#202020;letter-spacing:0.75px;">Ячейки</span>
<span class="t" style="left:904.7px;top:144.2px;font-size:10.5px;color:#202020;letter-spacing:0.50px;">Редактирование</span>
<span class="t" style="left:11.8px;top:108.3px;font-size:12px;color:#adabab;transform:scaleX(0.925);">Вставить</span>
<span class="t" style="left:227.5px;top:81.8px;font-size:12px;color:#adabab;transform:scaleX(0.845);">11</span>
<span class="t" style="left:118.9px;top:110.7px;font-size:13px;color:#a2a0a0;font-weight:700;">Ж</span>
<span class="t" style="left:141.4px;top:110.7px;font-size:13px;color:#a2a0a0;font-weight:700;font-style:italic;">К</span>
<span class="t" style="left:163.3px;top:110.7px;font-size:13px;color:#a2a0a0;font-weight:700;">Ч</span>
<span class="t" style="left:503.7px;top:73.6px;font-size:12px;color:#adabab;letter-spacing:0.35px;">Общий</span>
<span class="t" style="left:539.2px;top:95.3px;font-size:15px;color:#a5a3a3;">%</span>
<span class="t" style="left:559.8px;top:97.4px;font-size:9px;color:#a5a3a3;transform:scaleX(0.959);">000</span>
<span class="t" style="left:616.7px;top:73.7px;font-size:12px;color:#adabab;transform:scaleX(0.989);">Условное форматирование</span>
<span class="t" style="left:616.7px;top:96.6px;font-size:12px;color:#adabab;transform:scaleX(0.992);">Форматировать как таблицу</span>
<span class="t" style="left:616.7px;top:119.5px;font-size:12px;color:#adabab;transform:scaleX(0.960);">Стили ячеек</span>
<span class="t" style="left:825.5px;top:73.6px;font-size:12px;color:#adabab;transform:scaleX(0.927);">Вставить</span>
<span class="t" style="left:825.1px;top:96.7px;font-size:12px;color:#adabab;transform:scaleX(0.957);">Удалить</span>
<span class="t" style="left:825.5px;top:119.4px;font-size:12px;color:#adabab;transform:scaleX(0.971);">Формат</span>
<span class="t b" style="left:13.3px;top:175.5px;font-size:12px;color:#222;letter-spacing:0.33px;">D4</span>
<span class="t b" style="left:263.4px;top:174.6px;font-size:13px;color:#111;transform:scaleX(0.956);">=B3-49</span>
<span class="t b" style="left:131.6px;top:267.6px;font-size:13px;color:#111;transform:scaleX(0.932);">274</span>
<span class="t b" style="left:221.2px;top:287.4px;font-size:13px;color:#111;transform:scaleX(0.968);">=<span style="color:#1b76d0">B3</span>-49</span>
<span class="t" style="left:113.4px;top:672.4px;font-size:13.5px;color:#127341;font-weight:700;transform:scaleX(0.946);">microexcel.ru</span>
<span class="t b" style="left:9.9px;top:698.6px;font-size:11px;color:#333;transform:scaleX(0.960);">Ввод</span>
<span class="t" style="left:978.6px;top:698.9px;font-size:11px;color:#a3a3a3;transform:scaleX(0.936);">100 %</span>
</body></html>
